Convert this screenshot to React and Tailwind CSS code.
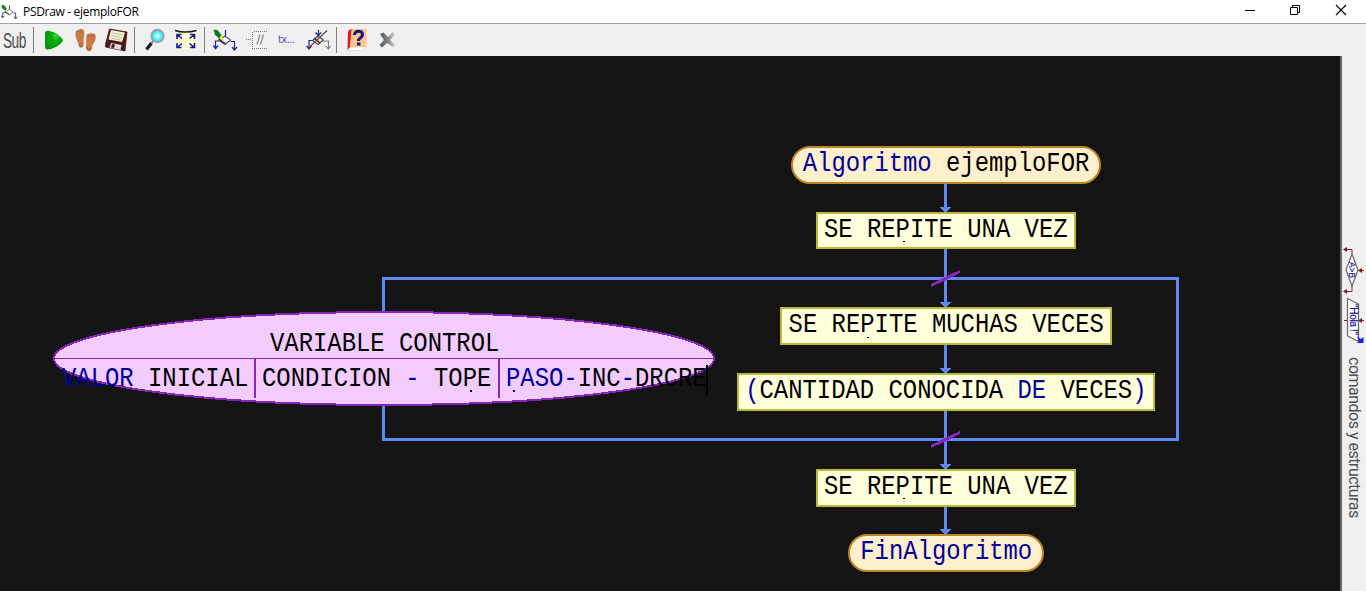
import React from "react";

const MONO = "font-['Liberation_Mono',monospace]";

function Code({ parts, className = "" }) {
  return (
    <span className={`${MONO} block whitespace-pre text-[27px] leading-[30px] scale-x-[0.8845] text-black ${className}`}>
      {parts.map(([text, keyword], i) => (
        <span key={i} className={keyword ? "text-[#00009c]" : ""}>{text}</span>
      ))}
    </span>
  );
}

function Node({ className, parts, dot }) {
  return (
    <div className={`absolute flex justify-center ${className}`}>
      <Code parts={parts} className="-mx-10 mt-px" />
      {dot && <i className={`absolute h-px w-0.5 bg-black ${dot}`} />}
    </div>
  );
}

function Separator() {
  return <div className="h-[26px] w-px shrink-0 bg-[#808080]" />;
}

function Branch() {
  return (
    <>
      <path d="M225 36L230.500 40L225 44.500L219 40.500Z" fill="#fff" stroke="#4a4a90" strokeWidth="1.100" />
      <path d="M225.500 30V36M219 41H215.500V48M230.500 41.500H234.500V49" fill="none" stroke="#1c2a9c" strokeWidth="1.200" />
      <path d="M213.500 45.500L215.500 48.500L218 45.500M232 47L234.500 50L237 47" fill="none" stroke="#1c2a9c" strokeWidth="1.400" />
    </>
  );
}

function Pencil() {
  return (
    <>
      <path d="M213.500 29.500L217.500 30L221.500 35L219.500 38.500L215 35Z" fill="#087f18" />
      <path d="M219 38.500L221.500 35.500L224 41L221.500 41Z" fill="#f5ed35" />
      <path d="M218.500 38.500L222 41.500L225.500 43.500" fill="none" stroke="#161646" strokeWidth="1.100" />
    </>
  );
}

function Icon({ box, w = 24, h = 24, children, className = "" }) {
  return <svg viewBox={box} width={w} height={h} className={`shrink-0 ${className}`}>{children}</svg>;
}

function TitleBar() {
  return (
    <header className="flex h-[23px] items-center bg-white">
      <Icon box="213 29 25 22" w={17} h={16} className="ml-px">
        <Branch /><Pencil />
      </Icon>
      <span className="ml-[5px] w-[116px] whitespace-nowrap font-['Open_Sans',sans-serif] text-[12px] leading-4 tracking-[-0.32px] text-black">PSDraw - ejemploFOR</span>
      <div className="ml-auto flex items-center pb-[3px]">
        <Icon box="0 0 12 12" w={12} h={12} className="mr-[33px]"><path d="M1 6.500H11" stroke="#000" /></Icon>
        <Icon box="0 0 12 12" w={12} h={12} className="mr-[34px]">
          <path d="M1.500 3.500H8.500V10.500H1.500ZM3.500 3.500V1.500H10.500V8.500H8.500" fill="none" stroke="#000" />
        </Icon>
        <Icon box="0 0 12 12" w={12} h={12} className="mr-[19px]"><path d="M1 1L11 11M11 1L1 11" stroke="#000" strokeWidth="1.100" /></Icon>
      </div>
    </header>
  );
}

function Toolbar() {
  return (
    <div className="flex h-[33px] items-center border-t border-[#a0a0a0] bg-[#f0f0f0]">
      <div className="w-[33px] pl-[2.500px]">
        <span className="block w-6 origin-left scale-x-[0.62] pt-0.5 font-['Liberation_Sans',sans-serif] text-[22px] leading-6 tracking-[-0.8px] text-[#4b4b4b]">Sub</span>
      </div>
      <Separator />
      <Icon box="42 28 24 24" className="ml-2">
        <defs><radialGradient id="play" cx="0.600" cy="0.300" r="0.700"><stop offset="0" stopColor="#48cf42" /><stop offset="0.350" stopColor="#0bab0c" /><stop offset="1" stopColor="#079408" /></radialGradient></defs>
        <path d="M45 33C45 29.500 49 30.500 53 32C58 34 62 37.500 63 40.500C61 45 53 49.500 47 49.500C44.500 49.500 45 46 45 33Z" fill="url(#play)" />
      </Icon>
      <Icon box="74 28 24 25" h={25} className="ml-2">
        <g fill="#cb7b48">
          <path d="M75.500 33C76 30 79 29 82 29C85 29.500 84.500 34 84 37C83 40 84 42 83.500 45C83 48.500 79 48.500 78.500 45C78 41 75 38 75.500 33Z" />
          <path d="M86.500 35.500C87 33 92 32.500 95 34C96.500 37 95.500 41 93.500 43.500C91.500 46 93 49 90.500 51C87.500 52 85.500 50 86 46C87 43 85.500 40 86.500 35.500Z" />
        </g>
        <path d="M76 32L79 31.500L82 32M87 36L91 35.500L95 36.500" fill="none" stroke="#a85f35" strokeWidth="0.800" />
        <path d="M79.500 44.500C80 47.500 82.500 47 82.500 44.500M87 46.500C87 50 90 50 90.500 47.500" fill="none" stroke="#95502b" strokeWidth="0.900" />
      </Icon>
      <Icon box="104 28 25 24" w={25} className="ml-1.5">
        <path d="M109.500 29L127 32L125 51L105.500 47V44Z" fill="#501719" stroke="#351012" strokeWidth="0.700" />
        <path d="M111 30L125 32.500L122 42L108.500 39.500Z" fill="#f1efd1" />
        <path d="M112 33L122.500 35M111.500 35.500L121.500 37.500M111 38L120.500 40" stroke="#b5b193" strokeWidth="0.700" />
        <path d="M111 43L121.500 45L120.500 50L109.500 47.500Z" fill="#dedede" />
        <path d="M112 44L115 44.500L114 48L111 47.500Z" fill="#501719" />
      </Icon>
      <div className="ml-[5px]"><Separator /></div>
      <Icon box="143 28 24 24" className="ml-2">
        <defs><radialGradient id="lens"><stop stopColor="#effeff" /><stop offset="0.500" stopColor="#68f1fb" /><stop offset="1" stopColor="#19dce9" /></radialGradient></defs>
        <path d="M151.500 43L146.500 49.500" stroke="#181818" strokeWidth="3.200" />
        <path d="M153.500 40.500L151 43.500" stroke="#777" strokeWidth="1.700" />
        <circle cx="157.500" cy="36" r="6.200" fill="url(#lens)" stroke="#9aa2a5" strokeWidth="1.900" />
      </Icon>
      <Icon box="174 28 24 24" className="ml-[7px]">
        <path d="M176 32H196V49H176Z" fill="#ffffd0" />
        <path d="M175 30.500C180 32.500 190 32.500 196.500 30.500" fill="none" stroke="#202020" strokeWidth="1.600" />
        <path d="M177 39V34.500H181.500M177 34.500L182 38.500M190 34.500H194.500V39M194.500 34.500L189.500 38.500M177 43V47.500H181.500M177 47.500L182 43.500M190 47.500H194.500V43M194.500 47.500L189.500 43.500" fill="none" stroke="#16169c" strokeWidth="1.600" />
      </Icon>
      <div className="ml-1.5"><Separator /></div>
      <Icon box="213 28 26 24" w={26} className="ml-2"><Branch /><Pencil /></Icon>
      <Icon box="244 28 26 24" w={26} className="ml-[5px]">
        <path d="M266.500 31.500H252.500V48.500H266.500M245.500 39.500H251.500" fill="none" stroke="#777" strokeDasharray="1 1" shapeRendering="crispEdges" />
        <path d="M260 34.500L257 44.500M263.500 34.500L260.500 44.500" stroke="#898989" strokeWidth="1.200" />
      </Icon>
      <span className="ml-2 w-[21px] font-['DejaVu_Sans',sans-serif] text-[10px] leading-4 tracking-[-0.55px] text-[#5054a8]">tx...</span>
      <Icon box="306 28 25 24" w={25} className="ml-[7px]">
        <path d="M318 36L323.500 40L318 44.500L312.500 40.500Z" fill="#e8e4c8" stroke="#474763" strokeWidth="1.100" />
        <path d="M318.500 30V35M315.500 32.500L318.500 35.500L321 32.500M312.500 40.500H309V49M306.500 46L309 49L311.500 46" fill="none" stroke="#1c2a9c" strokeWidth="1.200" />
        <path d="M323.500 41H328.500V49M326 46L328.500 49L330.500 46" fill="none" stroke="#808080" strokeWidth="1.100" />
        <path d="M314 38L320 43" stroke="#292929" strokeWidth="1.400" />
        <path d="M327 30.500L308.500 48" stroke="#7d3438" strokeWidth="1.100" />
      </Icon>
      <div className="ml-[5px]"><Separator /></div>
      <Icon box="345 28 24 24" className="ml-2">
        <path d="M348 32Q349 29 352 29L350 48L347.500 50Z" fill="#e51818" />
        <path d="M351.500 29H366.500V47H350Z" fill="#ffc58d" />
        <path d="M350 47H366.500L362 50.500H347.500Z" fill="#fff" stroke="#ccb9aa" strokeWidth="0.400" />
        <path d="M354.500 35C354.500 30 362.500 30 362.500 34.500C362.500 38 358.500 37.500 358.500 41" fill="none" stroke="#13138b" strokeWidth="3" />
        <path d="M357 42.500H360.500V45.500H357Z" fill="#13138b" />
      </Icon>
      <Icon box="375 28 24 24" className="ml-1.5">
        <defs><linearGradient id="fade"><stop stopColor="#555" /><stop offset="0.550" stopColor="#858585" /><stop offset="1" stopColor="#dedede" /></linearGradient></defs>
        <path d="M380 34L383.500 32.500L388 37L393 32L395 35L390 40L395.500 45L393 47L387 43L382 47.500L379.500 45L384 40Z" fill="url(#fade)" />
      </Icon>
    </div>
  );
}

function Sidebar() {
  return (
    <aside className="flex w-[26px] shrink-0 flex-col items-center border-l-2 border-[#696969] bg-[#f0f0f0] pt-[188px]">
      <svg viewBox="1342 244 24 102" width="24" height="102" className="shrink-0">
        <path d="M1346 249.500H1352V254M1352 286V291.500H1346M1358 270.500H1364M1344 320.500H1347M1358 320.500H1364" fill="none" stroke="#8c2020" />
        <path d="M1343 249.500L1347 247V252ZM1343 291.500L1347 289V294ZM1358 270.500L1362 268V273ZM1358 320.500L1362 318V323Z" fill="#9c0c0c" />
        <path d="M1352 254L1358 270L1352 286L1346 270ZM1347.500 298.500L1358.500 304V341.500L1347.500 336Z" fill="#fff" stroke="#666" strokeWidth="1.200" />
        <g fill="#1b1ba0" fontFamily="Liberation Sans, sans-serif">
          <text transform="translate(1349 262) rotate(90)" fontSize="9" textLength="16" stroke="#1b1ba0" strokeWidth="0.200" lengthAdjust="spacingAndGlyphs">A&gt;B</text>
          <text transform="translate(1349.500 304) rotate(90)" fontSize="10" textLength="31" stroke="#1b1ba0" strokeWidth="0.200">"Hola !"</text>
        </g>
        <path d="M1357 336L1361 339L1363.500 337V343H1357L1359 341Z" fill="#1020ff" />
      </svg>
      <span className="mt-[11px] w-5 whitespace-nowrap font-['Roboto',sans-serif] text-[16px] leading-5 tracking-[-0.5px] text-[#505050] [writing-mode:vertical-rl]">comandos y estructuras</span>
    </aside>
  );
}

function Canvas() {
  return (
    <main className="relative min-w-0 flex-1 overflow-hidden bg-[#141414]">
      <svg viewBox="0 56 1340 535" width="1340" height="535" className="absolute left-0 top-0" shapeRendering="crispEdges">
        <path d="M945.500 184V535M383.500 278.500H1177.500V439.500H383.500Z" fill="none" stroke="#5f87f5" strokeWidth="3" />
        <path d="M940 207H951L945.500 213ZM940 302H951L945.500 308ZM940 368H951L945.500 374ZM940 464H951L945.500 470ZM940 529H951L945.500 535Z" fill="#5f87f5" />
        <path d="M931 285.500L960 271.500M931 446.500L960 432.500" stroke="#8624bb" strokeWidth="3" />
        <ellipse cx="384" cy="358.500" rx="330" ry="46.500" fill="#f2ccff" stroke="#8624bb" strokeWidth="2" />
        <path d="M54 358.500H714" stroke="#8624bb" />
        <path d="M255 358V398M499 358V398" stroke="#8624bb" strokeWidth="2" />
      </svg>

      <Node className="left-[791px] top-[90px] h-[38px] w-[310px] rounded-full border-2 border-[#bd8426] bg-[#fff0cd]" parts={[["Algoritmo", true], [" ejemploFOR"]]} />
      <Node className="left-[816px] top-[156px] h-[37px] w-[260px] border-2 border-[#bdb938] bg-[#ffffdc]" parts={[["SE REPITE UNA VEZ"]]} dot="left-[85px] top-[27px]" />
      <Node className="left-[780px] top-[251px] h-[38px] w-[332px] border-2 border-[#bdb938] bg-[#ffffdc]" parts={[["SE REPITE MUCHAS VECES"]]} dot="left-[85px] top-[28px]" />
      <Node className="left-[737px] top-[317px] h-[38px] w-[418px] border-2 border-[#bdb938] bg-[#ffffdc]" parts={[["(", true], ["CANTIDAD CONOCIDA "], ["DE", true], [" VECES"], [")", true]]} />
      <Node className="left-[816px] top-[413px] h-[38px] w-[260px] border-2 border-[#bdb938] bg-[#ffffdc]" parts={[["SE REPITE UNA VEZ"]]} dot="left-[85px] top-[27px]" />
      <Node className="left-[848px] top-[478px] h-[38px] w-[196px] rounded-full border-2 border-[#bd8426] bg-[#fff0cd]" parts={[["FinAlgoritmo", true]]} />

      <Code className="absolute left-[269.5px] top-[273px] origin-left" parts={[["VARIABLE CONTROL"]]} />
      <Code className="absolute left-[62px] top-[308px] origin-left" parts={[["VALOR", true], [" INICIAL"]]} />
      <Code className="absolute left-[262px] top-[308px] origin-left" parts={[["CONDICION "], ["-", true], [" TOPE"]]} />
      <Code className="absolute left-[506px] top-[308px] origin-left" parts={[["PASO-", true], ["INC"], ["-", true], ["DRCRE"]]} />
      <i className="absolute left-[470px] top-[334px] h-0.5 w-0.5 bg-black" />
      <i className="absolute left-[513px] top-[334px] h-0.5 w-0.5 bg-[#00009c]" />
      <i className="absolute left-[706px] top-[309px] h-[30px] w-0.5 bg-black" />
    </main>
  );
}

export default function App() {
  return (
    <div className="flex h-[591px] w-[1366px] flex-col overflow-hidden bg-white">
      <TitleBar />
      <Toolbar />
      <div className="flex min-h-0 flex-1">
        <Canvas />
        <Sidebar />
      </div>
    </div>
  );
}
